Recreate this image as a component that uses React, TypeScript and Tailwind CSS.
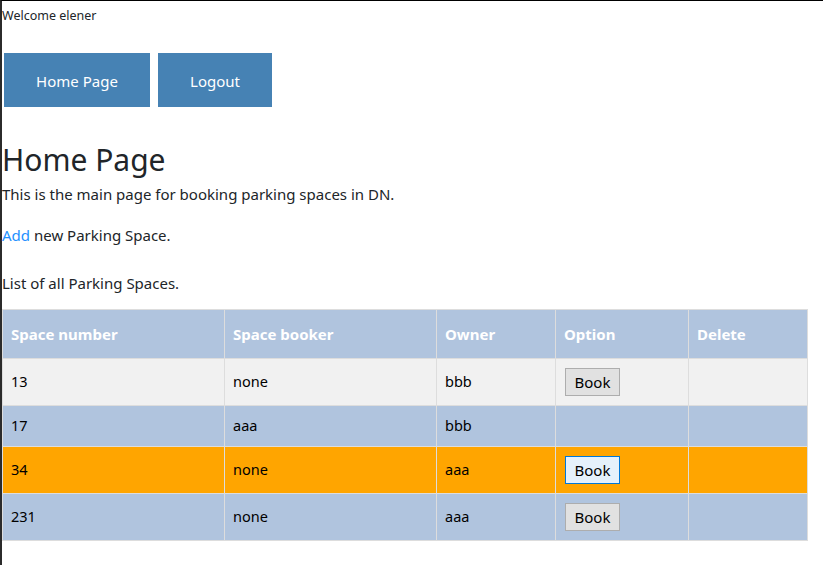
import React from 'react'

const ROWS = [
  { num: '13', booker: 'none', owner: 'bbb', book: 'normal', bg: 'bg-[#f1f1f1]' },
  { num: '17', booker: 'aaa', owner: 'bbb', book: null, bg: 'bg-[#b0c4de]' },
  { num: '34', booker: 'none', owner: 'aaa', book: 'focus', bg: 'bg-[#ffa500]' },
  { num: '231', booker: 'none', owner: 'aaa', book: 'normal', bg: 'bg-[#b0c4de]' },
]

const cell = 'border border-[#dddddd] px-2 text-left'

export default function App() {
  return (
    <div className="min-h-[565px] w-[823px] bg-white border-t border-black border-l-2 border-l-[#2b2b2b] text-[#212529] font-['Noto_Sans',sans-serif]">
      {/* Header */}
      <div className="text-[12.5px] leading-[14px] pt-[8px]">Welcome elener</div>

      <nav className="flex gap-2 mt-[30px] ml-[2px]">
        <a className="h-[54px] w-[146px] flex items-center justify-center pt-[3px] bg-[#4682b4] text-white text-[15px]">Home Page</a>
        <a className="h-[54px] w-[114px] flex items-center justify-center pt-[3px] bg-[#4682b4] text-white text-[15px]">Logout</a>
      </nav>

      <h1 className="text-[30px] leading-[36px] mt-[35px]">Home Page</h1>
      <p className="text-[15px] leading-[24px] mt-[4px]">This is the main page for booking parking spaces in DN.</p>
      <p className="text-[15px] leading-[24px] mt-[17px]">
        <span className="text-[#1e90ff]">Add</span> new Parking Space.
      </p>
      <p className="text-[15px] leading-[24px] mt-[24px]">List of all Parking Spaces.</p>

      <table className="mt-[14px] border-collapse w-[806px] text-black text-[14.5px]">
        <thead>
          <tr className="bg-[#b0c4de] text-white h-[49px]">
            <th className={`${cell} w-[222px] font-bold text-[15px]`}>Space number</th>
            <th className={`${cell} w-[212px] font-bold text-[15px]`}>Space booker</th>
            <th className={`${cell} w-[119px] font-bold text-[15px]`}>Owner</th>
            <th className={`${cell} w-[133px] font-bold text-[15px]`}>Option</th>
            <th className={`${cell} w-[119px] font-bold text-[15px]`}>Delete</th>
          </tr>
        </thead>
        <tbody>
          {ROWS.map((r) => (
            <tr key={r.num} className={`${r.bg} ${r.book ? 'h-[47px]' : 'h-[41px]'}`}>
              <td className={cell}>{r.num}</td>
              <td className={cell}>{r.booker}</td>
              <td className={cell}>{r.owner}</td>
              <td className={cell}>
                {r.book && (
                  <button
                    className={
                      r.book === 'focus'
                        ? 'h-[28px] w-[55px] ml-[1px] text-[15px] bg-[#e5f1fb] border border-[#0078d7]'
                        : 'h-[28px] w-[55px] ml-[1px] text-[15px] bg-[#e1e1e1] border border-[#adadad]'
                    }
                  >
                    Book
                  </button>
                )}
              </td>
              <td className={cell}></td>
            </tr>
          ))}
        </tbody>
      </table>
    </div>
  )
}
